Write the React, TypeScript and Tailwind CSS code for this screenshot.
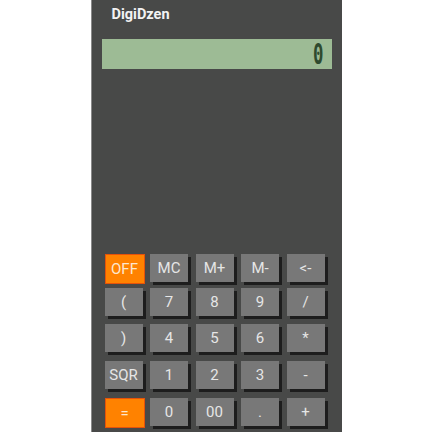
import React from "react";

type B = { label: string; orange?: boolean };

const rows: B[][] = [
  [{ label: "OFF", orange: true }, { label: "MC" }, { label: "M+" }, { label: "M-" }, { label: "<-" }],
  [{ label: "(" }, { label: "7" }, { label: "8" }, { label: "9" }, { label: "/" }],
  [{ label: ")" }, { label: "4" }, { label: "5" }, { label: "6" }, { label: "*" }],
  [{ label: "SQR" }, { label: "1" }, { label: "2" }, { label: "3" }, { label: "-" }],
  [{ label: "=", orange: true }, { label: "0" }, { label: "00" }, { label: "." }, { label: "+" }],
];

const rowMargins = ["mt-0", "mt-[3px]", "mt-[5px]", "mt-[6px]", "mt-[6px]"];

function Key({ b }: { b: B }) {
  if (b.orange) {
    return (
      <div className="w-[40px] h-[30px] bg-[#ff8200] border-[1.5px] border-[#e5520a] flex items-center justify-center text-[15px] text-[#fde7cf]">
        {b.label}
      </div>
    );
  }
  return (
    <div className="w-[41px] h-[31px] relative">
      <div className="absolute left-[3px] top-[3px] w-[38px] h-[28px] bg-[#1d1d1d]" />
      <div className="absolute left-0 top-0 w-[38px] h-[28px] bg-[#787878] flex items-center justify-center text-[15px] text-[#e6e6e6]">
        {b.label}
      </div>
    </div>
  );
}

export default function App() {
  return (
    <div className="w-[432px] h-[432px] bg-white flex justify-center" style={{ fontFamily: "Roboto, 'Liberation Sans', sans-serif" }}>
      <div className="w-[251px] h-[432px] bg-[#484948] flex flex-col border-l border-[#8a8a8a]">
        <div className="pl-[20px] pt-[6px] h-[39px] text-[14.5px] font-bold text-[#f2f2f2] leading-[17px]">DigiDzen</div>
        <div className="mx-[10px] h-[30px] bg-[#9dbb95] flex items-center justify-end pr-[8px]">
          <span className="text-[29px] leading-none text-[#2e4a2e] font-bold inline-block scale-x-[0.6] origin-right" style={{ fontFamily: "'DejaVu Sans Mono', monospace" }}>0</span>
        </div>
        <div className="pl-[13px] pt-[185px] flex flex-col">
          {rows.map((r, i) => (
            <div key={i} className={`grid grid-cols-[repeat(5,41px)] gap-x-[4.5px] ${rowMargins[i]}`}>
              {r.map((b) => (
                <Key key={b.label} b={b} />
              ))}
            </div>
          ))}
        </div>
      </div>
    </div>
  );
}
